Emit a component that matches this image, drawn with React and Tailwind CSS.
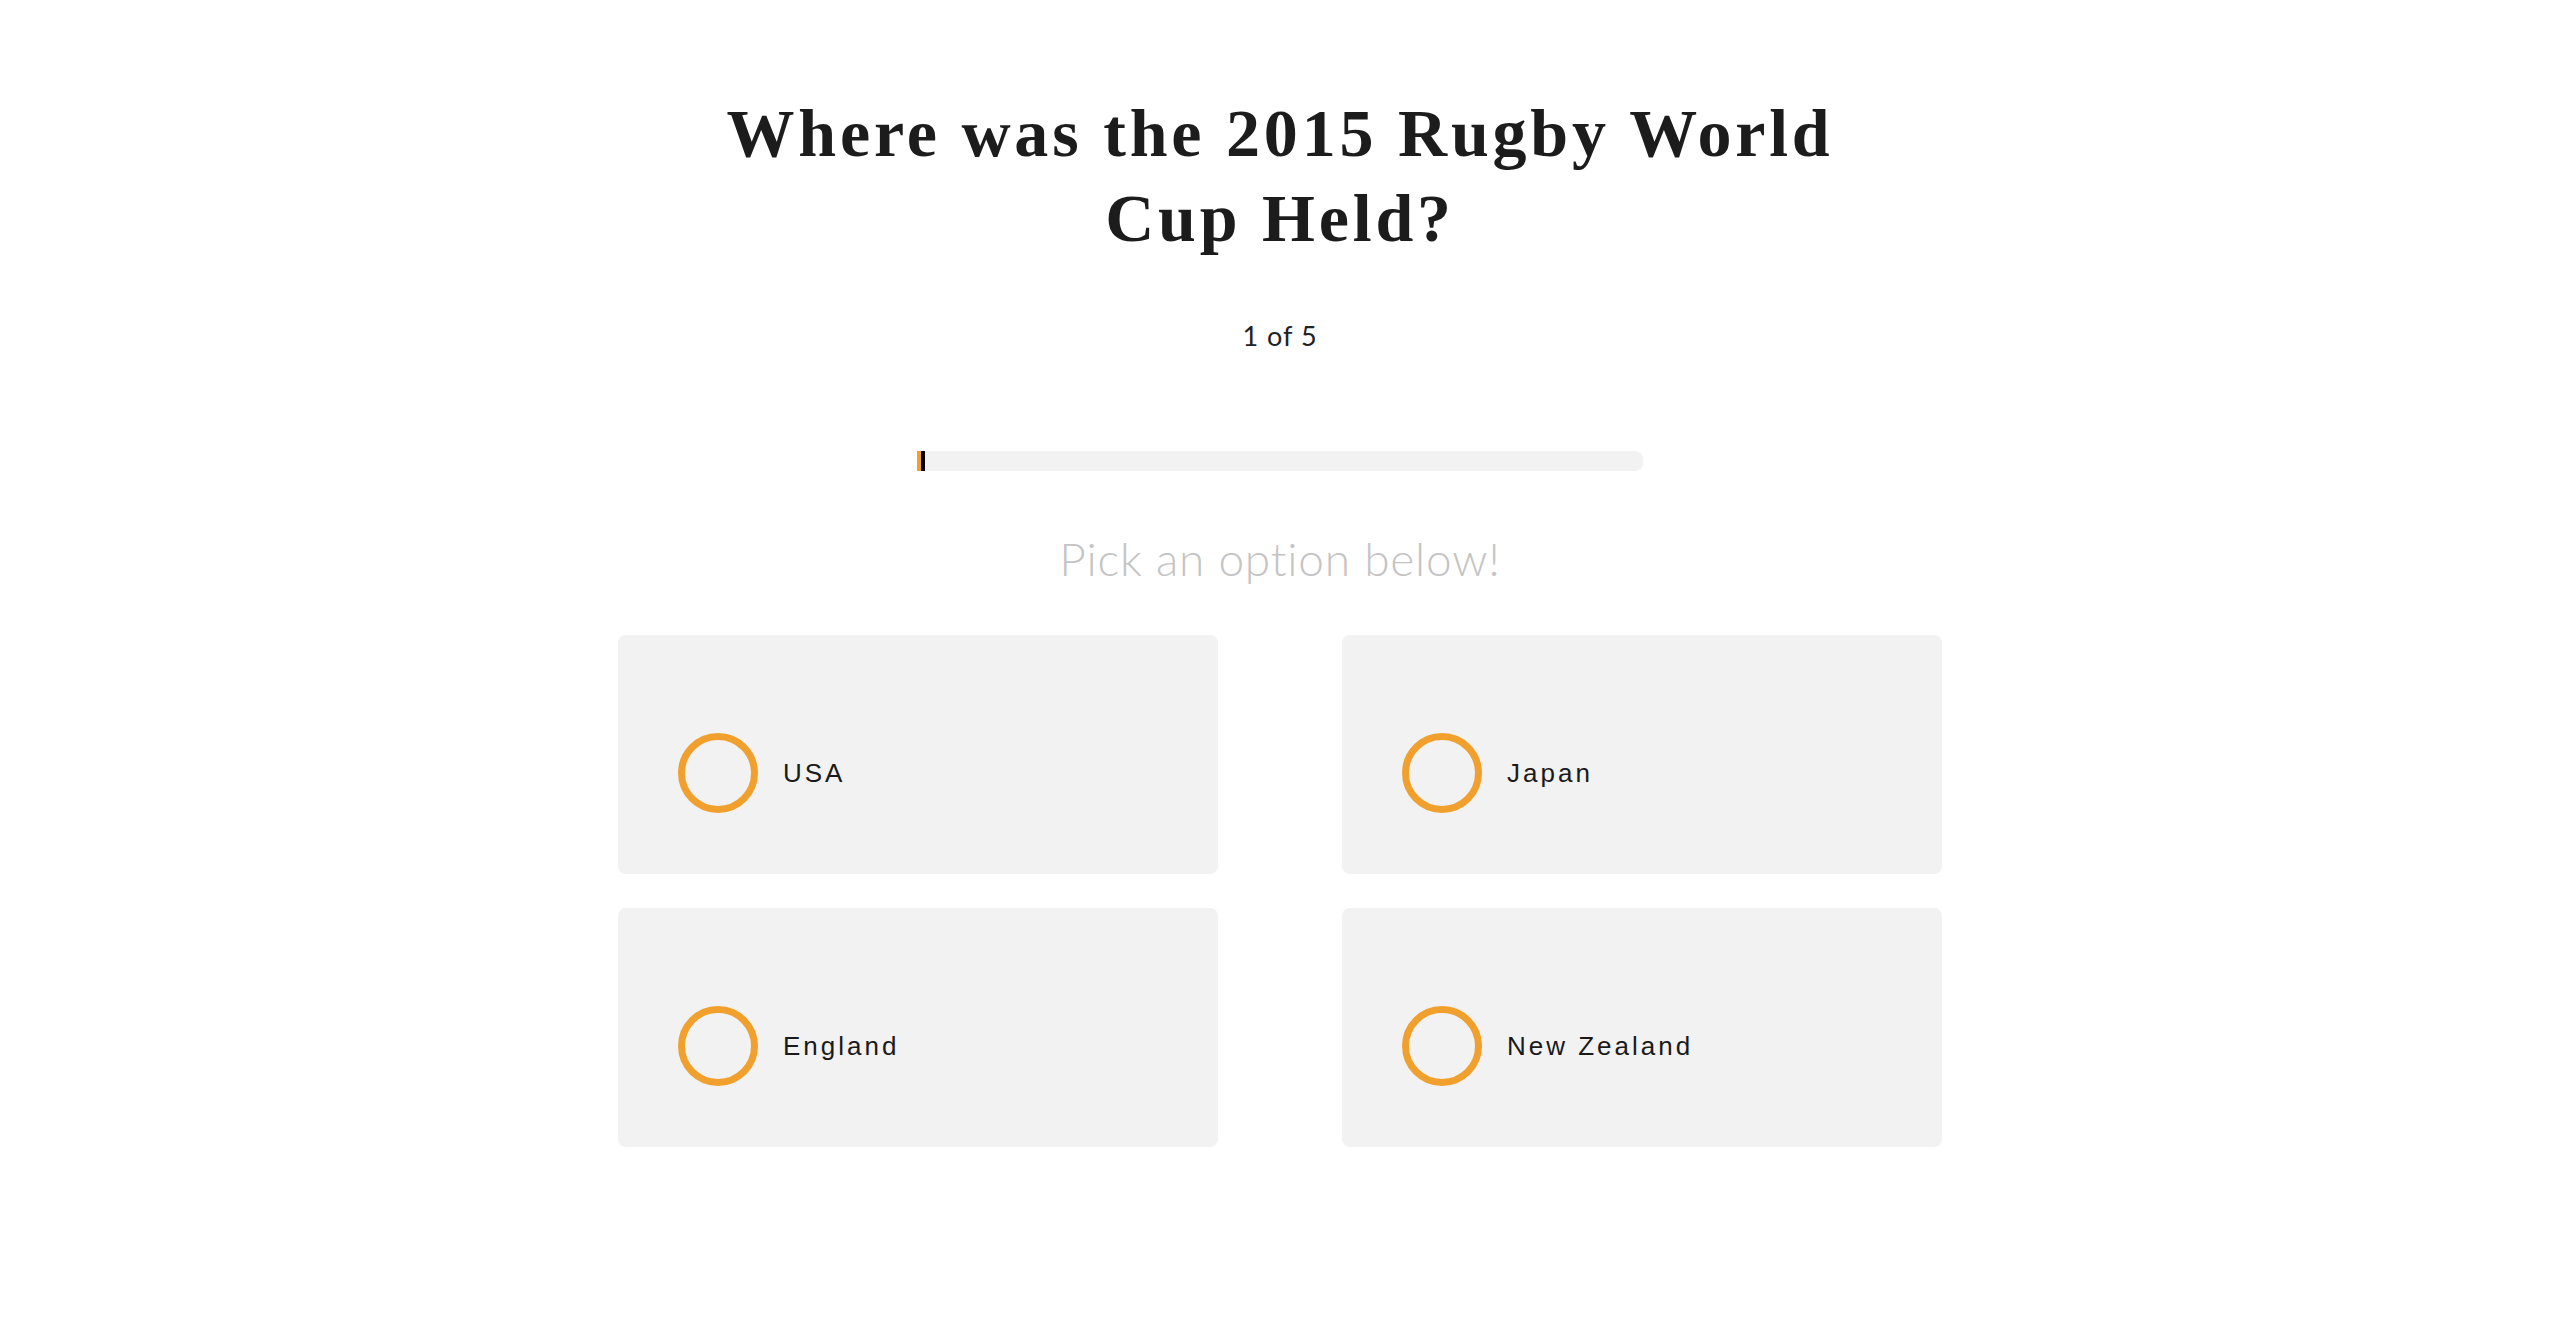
import React, { useState } from 'react';

const options = ['USA', 'Japan', 'England', 'New Zealand'];

const App = () => {
  const [picked, setPicked] = useState(null);

  return (
    <div className="min-h-screen w-full bg-white flex flex-col items-center pt-[91px]">
      <h1 className="max-w-[1200px] text-center text-[68px] leading-[85px] font-bold tracking-[3.8px] text-[#1c1c1c] font-['Liberation_Serif',serif]">
        Where was the 2015 Rugby World Cup Held?
      </h1>

      <p className="mt-[57px] text-[27px] leading-[36px] tracking-[1px] text-[#222] font-['Lato',sans-serif]">
        1 of 5
      </p>

      {/* progress */}
      <div className="mt-[97px] w-[726px] h-5 bg-[#f2f2f2] rounded-r-lg flex">
        <div className="w-2 h-full bg-[#f1a02e] border-r-4 border-black"></div>
      </div>

      <p className="mt-[57px] text-[46px] leading-[62px] font-light tracking-[0.8px] text-[#c4c4c4] font-['Lato',sans-serif]">
        Pick an option below!
      </p>

      <div className="mt-[45px] grid grid-cols-[600px_600px] gap-x-[124px] gap-y-[34px]">
        {options.map((opt, i) => (
          <button
            key={opt}
            onClick={() => setPicked(i)}
            className="h-[239px] bg-[#f2f2f2] rounded-lg flex items-center pt-[37px] pl-[60px] text-left"
          >
            <span className={`w-20 h-20 rounded-full border-[7px] border-[#f1a02e] shrink-0 ${picked === i ? 'bg-[#f1a02e]' : ''}`}></span>
            <span className="ml-[25px] text-[26px] tracking-[3px] text-[#1a1a1a] font-['Liberation_Sans',Arial,sans-serif]">
              {opt}
            </span>
          </button>
        ))}
      </div>
    </div>
  );
};

export default App;
